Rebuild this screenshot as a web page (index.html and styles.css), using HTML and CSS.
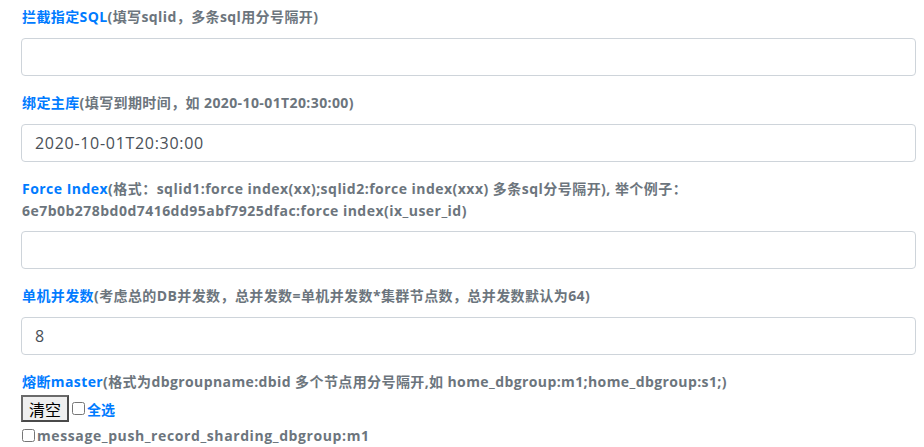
FILE: index.html
```html
<!DOCTYPE html>
<html lang="zh-CN">
<head>
  <meta charset="UTF-8">
  <meta name="viewport" content="width=device-width, initial-scale=1.0">
  <title>DB 配置</title>
  <link rel="stylesheet" href="styles.css">
</head>
<body>
  <form class="config-form">
    <div class="form-group">
      <label><span class="label-key">拦截指定SQL</span>(填写sqlid，多条sql用分号隔开)</label>
      <input type="text" class="form-control">
    </div>

    <div class="form-group">
      <label><span class="label-key">绑定主库</span>(填写到期时间，如 2020-10-01T20:30:00)</label>
      <input type="text" class="form-control" value="2020-10-01T20:30:00">
    </div>

    <div class="form-group">
      <label class="label-narrow"><span class="label-key">Force Index</span>(格式：sqlid1:force index(xx);sqlid2:force index(xxx) 多条sql分号隔开), 举个例子：<br>6e7b0b278bd0d7416dd95abf7925dfac:force index(ix_user_id)</label>
      <input type="text" class="form-control">
    </div>

    <div class="form-group">
      <label><span class="label-key">单机并发数</span>(考虑总的DB并发数，总并发数=单机并发数*集群节点数，总并发数默认为64)</label>
      <input type="text" class="form-control" value="8">
    </div>

    <div class="form-group last">
      <label class="label-tight"><span class="label-key">熔断master</span>(格式为dbgroupname:dbid 多个节点用分号隔开,如 home_dbgroup:m1;home_dbgroup:s1;)</label>
      <div class="tool-row">
        <button type="button" class="btn-clear">清空</button>
        <input type="checkbox" class="check"><span class="check-all">全选</span>
      </div>
      <div class="group-row">
        <input type="checkbox" class="check first"><span class="group-name">message_push_record_sharding_dbgroup:m1</span>
      </div>
    </div>
  </form>
</body>
</html>
```

FILE: styles.css
```css
* {
  box-sizing: border-box;
}

body {
  margin: 0;
  font-family: "Open Sans", "Noto Sans CJK SC", Arial, sans-serif;
  font-size: 16px;
  color: #212529;
  background: #fff;
}

.config-form {
  padding: 6px 8px 0 21px;
}

.form-group {
  margin-bottom: 16px;
}

.form-group label {
  display: block;
  margin-bottom: 10px;
  padding-left: 1px;
  font-size: 14px;
  font-weight: bold;
  line-height: 22px;
  letter-spacing: 0.4px;
  color: #6c757d;
}

.form-group .label-narrow {
  margin-bottom: 9px;
  letter-spacing: 0.47px;
}

.form-group .label-tight {
  margin-bottom: 2px;
}

.label-key {
  color: #007bff;
}

.form-control {
  display: block;
  width: 100%;
  height: 38px;
  padding: 6px 12px 6px 13px;
  font-family: inherit;
  font-size: 16px;
  line-height: 24px;
  letter-spacing: 0.7px;
  color: #495057;
  background: #fff;
  border: 1px solid #ced4da;
  border-radius: 4px;
  outline: none;
}

.form-control:focus {
  border-color: #80bdff;
}

.tool-row,
.group-row {
  display: flex;
  align-items: center;
}

.btn-clear {
  height: 27px;
  padding: 0 6px;
  font-family: inherit;
  font-size: 16px;
  color: #000;
  background: #efefef;
  border: 2px solid #4a4a4a;
  border-top-color: #6a6a6a;
  border-left-color: #6a6a6a;
}

.check {
  width: 13px;
  height: 13px;
  margin: 0 2px 0 3px;
}

.check.first {
  margin-left: 1px;
}

.check-all {
  font-size: 14px;
  font-weight: bold;
  color: #007bff;
}

.group-row {
  margin-top: 2px;
  height: 22px;
}

.group-name {
  font-size: 14px;
  font-weight: bold;
  letter-spacing: 0.6px;
  color: #6c757d;
}
```
